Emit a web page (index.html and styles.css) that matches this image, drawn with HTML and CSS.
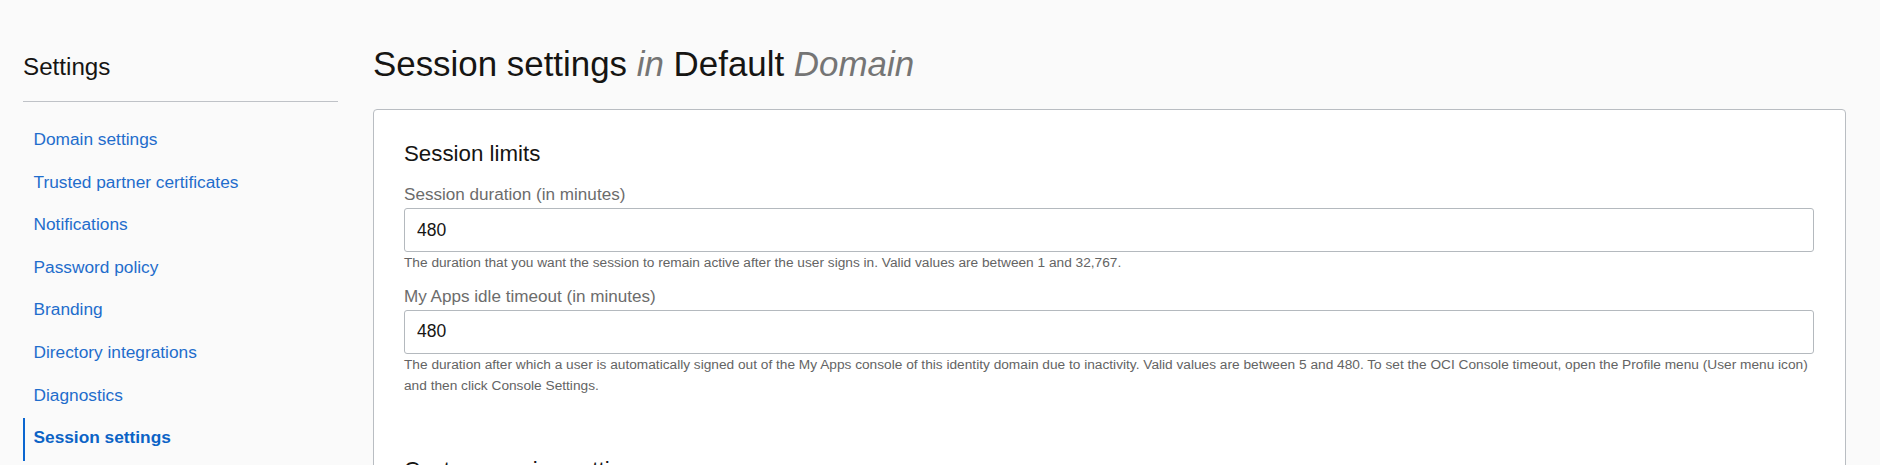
FILE: index.html
```html
<!DOCTYPE html>
<html lang="en">
<head>
<meta charset="utf-8">
<title>Session settings</title>
<link rel="stylesheet" href="styles.css">
</head>
<body>
<div class="page">
  <aside class="sidebar">
    <h2 class="side-title">Settings</h2>
    <nav class="side-nav">
      <a class="nav-item" href="#">Domain settings</a>
      <a class="nav-item" href="#">Trusted partner certificates</a>
      <a class="nav-item" href="#">Notifications</a>
      <a class="nav-item" href="#">Password policy</a>
      <a class="nav-item" href="#">Branding</a>
      <a class="nav-item" href="#">Directory integrations</a>
      <a class="nav-item" href="#">Diagnostics</a>
      <a class="nav-item active" href="#">Session settings</a>
    </nav>
  </aside>
  <main class="main">
    <h1 class="page-title">Session settings <em>in</em> Default <em>Domain</em></h1>
    <section class="card">
      <h3 class="section-title">Session limits</h3>
      <div class="field">
        <label class="field-label" for="dur">Session duration (in minutes)</label>
        <input class="field-input" id="dur" type="text" value="480">
        <p class="field-help">The duration that you want the session to remain active after the user signs in. Valid values are between 1 and 32,767.</p>
      </div>
      <div class="field">
        <label class="field-label" for="idle">My Apps idle timeout (in minutes)</label>
        <input class="field-input" id="idle" type="text" value="480">
        <p class="field-help">The duration after which a user is automatically signed out of the My Apps console of this identity domain due to inactivity. Valid values are between 5 and 480. To set the OCI Console timeout, open the Profile menu (User menu icon) and then click Console Settings.</p>
      </div>
      <h3 class="section-title section-next">Custom session settings</h3>
    </section>
  </main>
</div>
</body>
</html>
```
FILE: styles.css
```css
* { box-sizing: border-box; }

html, body {
  margin: 0;
  padding: 0;
  background: #fafafa;
  font-family: "Liberation Sans", Arial, sans-serif;
  color: #161513;
}

.page {
  display: grid;
  grid-template-columns: 315px 1473px;
  column-gap: 35px;
  padding: 0 34px 0 23px;
}

/* Sidebar */
.sidebar {
  padding-top: 53px;
}

.side-title {
  margin: 0;
  font-size: 24.2px;
  line-height: 28px;
  font-weight: 400;
  color: #161513;
  padding-bottom: 20px;
  border-bottom: 1px solid #bfc2c7;
}

.side-nav {
  display: flex;
  flex-direction: column;
  margin-top: 18px;
}

.nav-item {
  display: block;
  font-size: 17.3px;
  line-height: 20px;
  padding: 9px 0 13.6px 8.5px;
  border-left: 2px solid transparent;
  color: #1f6dcc;
  text-decoration: none;
}

.nav-item.active {
  border-left-color: #0b66d0;
  color: #0b63c6;
  font-weight: 700;
}

/* Main */
.main {
  padding-top: 43.6px;
}

.page-title {
  margin: 0 0 25.7px;
  font-size: 34.9px;
  line-height: 40px;
  font-weight: 400;
  color: #161513;
}

.page-title em {
  color: #757575;
  font-style: italic;
}

.card {
  background: #fff;
  border: 1px solid #b9bdc2;
  border-radius: 4px;
  padding: 31px 31px 200px 30px;
}

.section-title {
  margin: 0;
  font-size: 22.3px;
  line-height: 26px;
  font-weight: 400;
  color: #161513;
}

.section-next {
  margin-top: 61.7px;
}

.field {
  display: flex;
  flex-direction: column;
  margin-top: 17.8px;
}

.field + .field {
  margin-top: 14.1px;
}

.field-label {
  font-size: 17.1px;
  line-height: 20px;
  color: #6c6c6c;
  margin-bottom: 3.2px;
}

.field-input {
  height: 43.5px;
  border: 1px solid #b4b9be;
  border-radius: 3px;
  padding: 0 12px;
  font-family: "Liberation Sans", Arial, sans-serif;
  font-size: 17.5px;
  color: #161513;
  background: #fff;
  outline: none;
}

.field-help {
  margin: 0 -6px 0 0;
  font-size: 13.7px;
  line-height: 21px;
  color: #646464;
}
```
